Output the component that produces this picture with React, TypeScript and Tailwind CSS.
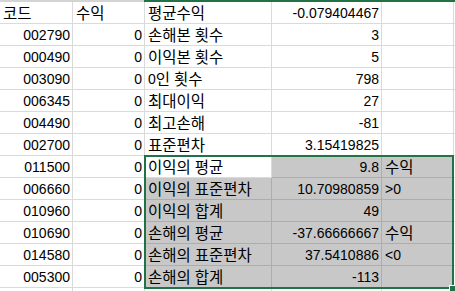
import React from "react";

type Row = [string, string, string, string, string];

const header: Row = ["코드", "수익", "평균수익", "-0.079404467", ""];
const rows: Row[] = [
  ["002790", "0", "손해본 횟수", "3", ""],
  ["000490", "0", "이익본 횟수", "5", ""],
  ["003090", "0", "0인 횟수", "798", ""],
  ["006345", "0", "최대이익", "27", ""],
  ["004490", "0", "최고손해", "-81", ""],
  ["002700", "0", "표준편차", "3.15419825", ""],
  ["011500", "0", "이익의 평균", "9.8", "수익"],
  ["006660", "0", "이익의 표준편차", "10.70980859", ">0"],
  ["010960", "0", "이익의 합계", "49", ""],
  ["010690", "0", "손해의 평균", "-37.66666667", "수익"],
  ["014580", "0", "손해의 표준편차", "37.5410886", "<0"],
  ["005300", "0", "손해의 합계", "-113", ""],
];

const font = {
  fontFamily: '"Liberation Sans", "Noto Sans CJK KR", sans-serif',
};

function Text({ text }: { text: string }) {
  const parts = text.split(/([\uac00-\ud7a3]+)/).filter((p) => p !== "");
  return (
    <>
      {parts.map((p, i) =>
        /[\uac00-\ud7a3]/.test(p) ? (
          <span key={i} className="text-[15.5px]" style={{ fontFamily: '"Noto Sans CJK KR", sans-serif' }}>
            {p}
          </span>
        ) : (
          <span key={i} className="whitespace-pre">{p}</span>
        )
      )}
    </>
  );
}

function Cell({
  text,
  align,
  gray,
}: {
  text: string;
  align: "left" | "right";
  gray?: boolean;
}) {
  return (
    <div
      className={
        "h-[22px] border-r border-b flex items-center overflow-hidden whitespace-nowrap text-[14px] leading-none text-black " +
        (gray ? "bg-[#c8c8c8] border-[#adadad] " : "bg-white border-[#dadada] ") +
        (align === "right" ? "justify-end pr-[2px]" : "justify-start pl-[3px]")
      }
    >
      <Text text={text} />
    </div>
  );
}

function GridRow({ r, sel, active }: { r: Row; sel?: boolean; active?: boolean }) {
  return (
    <>
      <Cell text={r[0]} align="right" />
      <Cell text={r[1]} align="right" />
      <Cell text={r[2]} align="left" gray={sel && !active} />
      <Cell text={r[3]} align="right" gray={sel} />
      <Cell text={r[4]} align="left" gray={sel} />
      <div className="h-[22px] border-b border-[#dadada] bg-white" />
    </>
  );
}

export default function App() {
  return (
    <div
      className="relative w-[455px] h-[291px] overflow-hidden bg-white"
      style={font}
    >
      <div className="flex h-[2px]">
        <div className="w-[144px] bg-[#d4d4d4]" />
        <div className="flex-1 bg-[#217346]" />
      </div>
      <div className="grid grid-cols-[73px_72px_127px_110px_72px_1fr]">
        <Cell text={header[0]} align="left" />
        <Cell text={header[1]} align="left" />
        <Cell text={header[2]} align="left" />
        <Cell text={header[3]} align="right" />
        <Cell text={header[4]} align="left" />
        <div className="h-[22px] border-b border-[#dadada]" />
        {rows.map((r, i) => (
          <GridRow key={i} r={r} sel={i >= 6} active={i === 6} />
        ))}
        <Cell text="" align="right" />
        <Cell text="" align="right" />
        <Cell text="" align="left" />
        <Cell text="" align="right" />
        <Cell text="" align="left" />
        <div className="h-[22px]" />
      </div>
      {/* selection box */}
      <div className="absolute left-[144px] top-[155px] w-[310px] h-[134px] border-2 border-[#217346] pointer-events-none" />
      {/* fill handle */}
      <div className="absolute left-[449px] top-[285px] w-[7px] h-[7px] bg-[#217346] border border-white" />
    </div>
  );
}
